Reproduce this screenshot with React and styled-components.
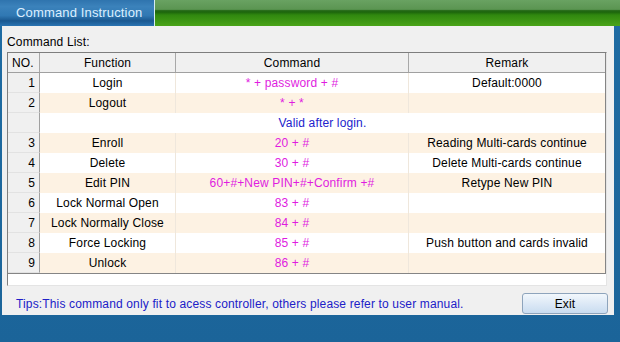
import React from "react";
import styled, { createGlobalStyle } from "styled-components";

const Global = createGlobalStyle`
  html, body { margin: 0; padding: 0; background: #1d69a0; }
  body { font-family: "Liberation Sans", Arial, sans-serif; font-size: 12px; letter-spacing: 0.15px; }
`;

const Window = styled.div`
  width: 620px;
  height: 342px;
  background: linear-gradient(#1f6ca3, #1b6499);
  display: flex;
  flex-direction: column;
  overflow: hidden;
`;

const TitleBar = styled.div`
  height: 26px;
  display: flex;
  flex-shrink: 0;
`;

const Tab = styled.div`
  width: 155px;
  border-right: 1px solid #d6ecf4;
  background: linear-gradient(#2f74ae 0%, #3b82bb 25%, #3078b3 60%, #1a5890 80%, #2a74b2 100%);
  color: #dcefff;
  font-size: 13px;
  display: flex;
  align-items: center;
  padding-left: 16px;
  padding-bottom: 1px;
  box-sizing: border-box;
`;

const GreenBar = styled.div`
  flex: 1;
  background: linear-gradient(#69a262 0%, #5b9552 36%, #2a6e1c 40%, #1c640c 46%, #30880f 58%, #4aa418 100%);
`;

const Panel = styled.div`
  margin-left: 2px;
  width: 612px;
  height: 289px;
  background: #f0f0f0;
  box-sizing: border-box;
  padding: 9px 0 0 5px;
  display: flex;
  flex-direction: column;
`;

const Label = styled.div`
  color: #000;
  height: 17px;
  line-height: 14px;
`;

const GridFrame = styled.div`
  width: 600px;
  height: 234px;
  box-sizing: border-box;
  border: 1px solid;
  border-color: #7e7e7e #e4e4e4 #e4e4e4 #7e7e7e;
  background: #fff;
`;

const Table = styled.div`
  width: 598px;
  border-right: 1px solid #858585;
  border-bottom: 1px solid #858585;
  box-sizing: border-box;
`;

const Row = styled.div`
  display: grid;
  grid-template-columns: 32px 136px 233px 196px;
  height: 20px;
  background: ${(p) => (p.$alt ? "#fdf2e3" : "#ffffff")};
`;

const HeadRow = styled(Row)`
  background: #f0f0f0;
  border-bottom: 1px solid #a0a0a0;
  box-sizing: border-box;
`;

const HeadCell = styled.div`
  display: flex;
  align-items: center;
  justify-content: ${(p) => (p.$left ? "flex-start" : "center")};
  padding-left: ${(p) => (p.$left ? "4px" : "0")};
  border-right: ${(p) => (p.$last ? "none" : "1px solid #a8a8a8")};
  color: #000;
`;

const NoCell = styled.div`
  background: #f0f0f0;
  border-right: 1px solid #a0a0a0;
  border-bottom: 1px solid #e2e2e2;
  display: flex;
  align-items: center;
  justify-content: flex-end;
  padding-right: 4px;
  color: #000;
`;

const Cell = styled.div`
  display: flex;
  align-items: center;
  justify-content: center;
  border-right: ${(p) => (p.$last ? "none" : "1px solid #efe7dc")};
  color: ${(p) => (p.$cmd ? "#e01ce0" : "#000")};
  white-space: nowrap;
`;

const NoteCell = styled.div`
  grid-column: 2 / 5;
  display: flex;
  align-items: center;
  justify-content: center;
  color: #2222cc;
`;

const Footer = styled.div`
  display: flex;
  align-items: center;
  justify-content: space-between;
  margin-top: 7px;
  padding-left: 9px;
  width: 601px;
  box-sizing: border-box;
`;

const Tips = styled.div`
  color: #2020c8;
`;

const ExitButton = styled.button`
  width: 86px;
  height: 21px;
  border: 1px solid #8ea4bc;
  border-radius: 3px;
  background: linear-gradient(#f2f7fc 0%, #dde9f6 50%, #c9dcf0 100%);
  font-family: "Liberation Sans", Arial, sans-serif;
  font-size: 12px;
  letter-spacing: 0.15px;
  color: #000;
  padding: 0;
`;

const rows = [
  { no: "1", fn: "Login", cmd: "* + password + #", rm: "Default:0000" },
  { no: "2", fn: "Logout", cmd: "* + *", rm: "" },
  { note: "Valid after login." },
  { no: "3", fn: "Enroll", cmd: "20 + #", rm: "Reading Multi-cards continue" },
  { no: "4", fn: "Delete", cmd: "30 + #", rm: "Delete Multi-cards continue" },
  { no: "5", fn: "Edit PIN", cmd: "60+#+New PIN+#+Confirm +#", rm: "Retype New PIN" },
  { no: "6", fn: "Lock Normal Open", cmd: "83 + #", rm: "" },
  { no: "7", fn: "Lock Normally Close", cmd: "84 + #", rm: "" },
  { no: "8", fn: "Force Locking", cmd: "85 + #", rm: "Push button and cards invalid" },
  { no: "9", fn: "Unlock", cmd: "86 + #", rm: "" },
];

export default function App() {
  return (
    <>
      <Global />
      <Window>
        <TitleBar>
          <Tab>Command Instruction</Tab>
          <GreenBar />
        </TitleBar>
        <Panel>
          <Label>Command List:</Label>
          <GridFrame>
            <Table>
              <HeadRow>
                <HeadCell $left>NO.</HeadCell>
                <HeadCell>Function</HeadCell>
                <HeadCell>Command</HeadCell>
                <HeadCell $last>Remark</HeadCell>
              </HeadRow>
              {rows.map((r, i) =>
                r.note ? (
                  <Row key={i} $alt={i % 2 === 1}>
                    <NoCell />
                    <NoteCell>{r.note}</NoteCell>
                  </Row>
                ) : (
                  <Row key={i} $alt={i % 2 === 1}>
                    <NoCell>{r.no}</NoCell>
                    <Cell>{r.fn}</Cell>
                    <Cell $cmd>{r.cmd}</Cell>
                    <Cell $last>{r.rm}</Cell>
                  </Row>
                )
              )}
            </Table>
          </GridFrame>
          <Footer>
            <Tips>Tips:This command only fit to acess controller, others please refer to user manual.</Tips>
            <ExitButton>Exit</ExitButton>
          </Footer>
        </Panel>
      </Window>
    </>
  );
}
